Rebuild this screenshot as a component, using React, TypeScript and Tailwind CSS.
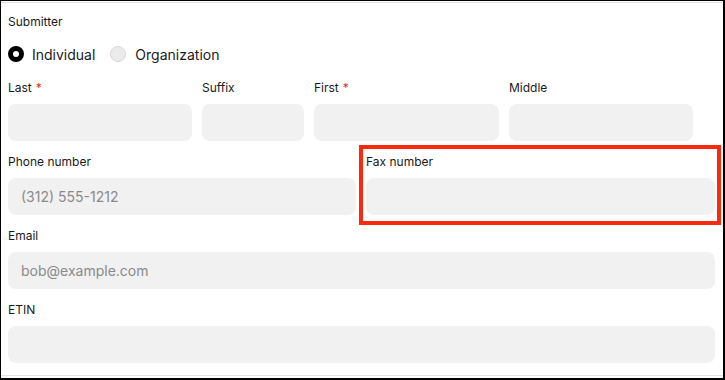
import React from "react";

const font = { fontFamily: "Inter, 'Noto Sans', sans-serif" };

function Label({ text, req }: { text: string; req?: boolean }) {
  return (
    <div className="text-[12px] leading-[16px] text-[#1a1a1a] mb-2 whitespace-nowrap">
      {text}
      {req && <span className="text-[#e0321f] ml-[4px]">*</span>}
    </div>
  );
}

function Input({ placeholder }: { placeholder?: string }) {
  return (
    <div className="h-[37px] w-full rounded-[8px] bg-[#f1f1f1] flex items-center pl-[13px] text-[14px] text-[#8a8a8a]">
      {placeholder}
    </div>
  );
}

function Field({ label, req, placeholder, className }: { label: string; req?: boolean; placeholder?: string; className?: string }) {
  return (
    <div className={className}>
      <Label text={label} req={req} />
      <Input placeholder={placeholder} />
    </div>
  );
}

export default function App() {
  return (
    <div
      style={font}
      className="w-[725px] h-[380px] bg-white border-l border-t border-r-2 border-b-2 border-black box-border overflow-hidden"
    >
      <div className="mt-[1px] h-[374px] border-y border-[#e2e2e2] pl-[7px] pr-[8px] pt-[11px]">
        <div className="text-[12px] leading-[16px] text-[#1a1a1a]">Submitter</div>
        <div className="flex items-center h-[22px] mt-[13px]">
          <div className="w-[16px] h-[16px] rounded-full border-[5px] border-black bg-white" />
          <span className="ml-[8px] text-[14px] text-[#1a1a1a]">Individual</span>
          <div className="ml-[15px] w-[16px] h-[16px] rounded-full border border-[#d9d9d9] bg-[#ebebeb]" />
          <span className="ml-[9px] text-[14px] text-[#1a1a1a]">Organization</span>
        </div>
        <div className="flex gap-[10px] mt-[15px]">
          <Field label="Last" req className="w-[184px]" />
          <Field label="Suffix" className="w-[102px]" />
          <Field label="First" req className="w-[185px]" />
          <Field label="Middle" className="w-[184px]" />
        </div>
        <div className="flex gap-[10px] mt-[13px]">
          <Field label="Phone number" placeholder="(312) 555-1212" className="w-[348px]" />
          <div className="relative flex-1">
            <Field label="Fax number" />
            <div className="absolute -left-[7px] -right-[6px] -top-[9px] -bottom-[10px] border-4 border-[#fb2a0e] pointer-events-none" />
          </div>
        </div>
        <Field label="Email" placeholder="bob@example.com" className="mt-[13px]" />
        <Field label="ETIN" className="mt-[13px]" />
      </div>
    </div>
  );
}
